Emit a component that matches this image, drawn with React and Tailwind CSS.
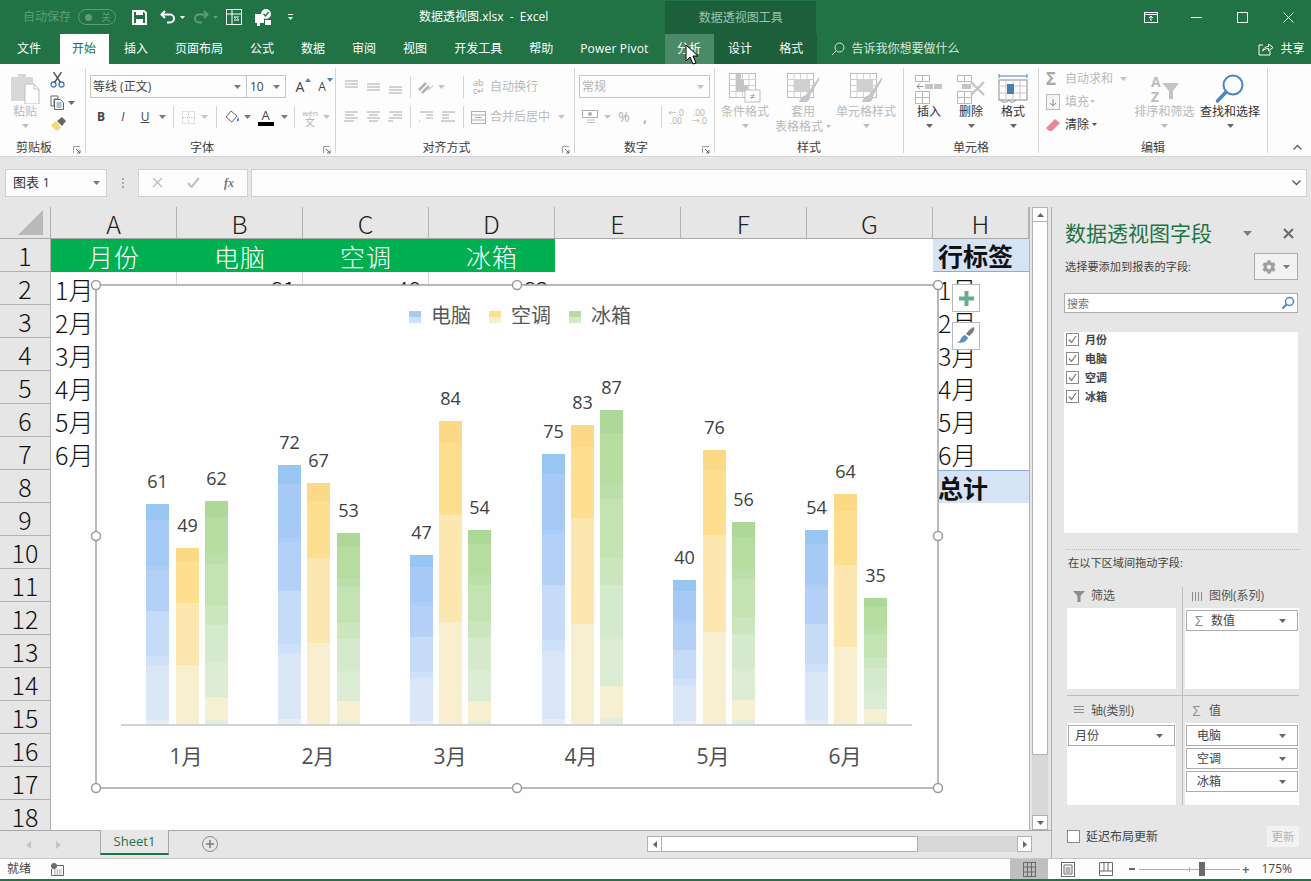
import React from 'react';
import { FaCog } from 'react-icons/fa';

const Caret = ({ c = '#7a7a7a', w = 7, h = 4 }) => (
  <svg width={w} height={h} viewBox="0 0 7 4" className="shrink-0"><polygon points="0,0 7,0 3.5,4" fill={c} /></svg>
);
const VSep = ({ h = 'h-[22px]' }) => <div className={`w-px bg-[#d4d4d4] ${h}`} />;
const Launcher = () => (
  <svg width="8" height="8" viewBox="0 0 8 8" className="absolute right-[4px] bottom-[-1px]"><path d="M0.5 7V.5H7" fill="none" stroke="#a0a0a0" /><path d="M3 3l4 4M7 4v3H4" fill="none" stroke="#6a6a6a" /></svg>
);
const Group = ({ w, label, launcher, children }) => (
  <div className={`relative flex flex-col h-[85px] border-r border-[#d4d4d4] shrink-0 ${w}`}>
    <div className="h-[71px] flex shrink-0">{children}</div>
    <div className={`h-[18px] shrink-0 flex items-center justify-center text-[12px] leading-none text-[#404040] ${launcher ? 'pr-[17px]' : ''}`}>{label}</div>
    {launcher && <Launcher />}
  </div>
);
const Big = ({ w, icon, lines, dim, caret = true }) => (
  <div className={`flex flex-col items-center shrink-0 ${w}`}>
    <div className="h-[36px] flex items-end justify-center">{icon}</div>
    {lines.map((l, i) => (
      <div key={i} className={`h-[15px] text-[12px] leading-[15px] whitespace-nowrap ${dim ? 'text-[#b9b9b9]' : 'text-[#333333]'}`}>{l}</div>
    ))}
    {caret && <div className="mt-[5px]"><Caret c={dim ? '#bdbdbd' : '#666666'} /></div>}
  </div>
);
const Slot = ({ w, children }) => <div className={`flex items-center justify-center shrink-0 h-full ${w}`}>{children}</div>;

const Lines = ({ ys, x1 = [1, 1, 1], x2 = [14, 14, 14], c = '#a8a8a8' }) => (
  <svg width="15" height="15" viewBox="0 0 15 15">
    {ys.map((y, i) => <line key={i} x1={x1[i]} x2={x2[i]} y1={y} y2={y} stroke={c} />)}
  </svg>
);

const CellStyleIcon = ({ kind }) => (
  <svg width="34" height="32" viewBox="0 0 34 32">
    <rect x="1.5" y="1.5" width="26" height="24" fill="#fff" stroke="#bdbdbd" />
    <path d="M1.5 7.5h26M1.5 13.5h26M1.5 19.5h26M8 1.5v24M14.5 1.5v24M21 1.5v24" stroke="#d0d0d0" fill="none" />
    {kind === 0 && <><rect x="8" y="7.5" width="8" height="6" fill="#c4c4c4" /><rect x="8" y="13.5" width="12" height="6" fill="#c4c4c4" /><rect x="8" y="1.5" width="5" height="6" fill="#c4c4c4" /><rect x="17" y="18" width="15" height="12" fill="#fff" stroke="#bdbdbd" /><text x="24.5" y="28" textAnchor="middle" fontSize="11" fill="#9a9a9a">≠</text></>}
    {kind > 0 && <rect x="8" y="7.5" width="16" height="12" fill="#d0d0d0" />}
    {kind > 0 && <path d="M33 5L20 23c-2 1-5 1-7 7h8c3-2 3-4 3-6L33 8z" fill="#c6c6c6" />}
  </svg>
);
const CellOp = ({ kind }) => (
  <svg width="30" height="30" viewBox="0 0 30 30">
    <path d="M1.5 1.5h14v6h-14zM8.5 1.5v6M1.5 17.5h14v12h-14zM1.5 23.5h14M8.5 17.5v12" fill="#fff" stroke="#b8b8b8" />
    {kind === 0 && <><path d="M3 12.5h6M3 12.5l3-3M3 12.5l3 3" stroke="#8a8a8a" fill="none" /><rect x="11" y="10" width="8" height="5" fill="#c6c6c6" /><rect x="20" y="10" width="8" height="5" fill="#c6c6c6" /></>}
    {kind === 1 && <><rect x="6" y="10" width="9" height="5" fill="#c6c6c6" /><path d="M15 8l13 13M28 8L15 21" stroke="#c4c4c4" strokeWidth="2.4" /></>}
  </svg>
);

const bars = [
  [[146, 504, 61], [176, 548, 49], [205, 501, 62]],
  [[278, 465, 72], [307, 483, 67], [337, 533, 53]],
  [[410, 555, 47], [439, 421, 84], [468, 530, 54]],
  [[542, 454, 75], [571, 425, 83], [600, 410, 87]],
  [[673, 580, 40], [703, 450, 76], [732, 522, 56]],
  [[805, 530, 54], [834, 494, 64], [864, 598, 35]],
];
const seg = [
  { f: [0, 0.073, 0.28, 0.3, 0.486, 0.69, 0.73, 0.98, 1], c: ['#97c6f3', '#a6c9f6', '#abcdf7', '#b4d0f7', '#c6dbf8', '#cfe0fa', '#dae5f6', '#e5edf8'] },
  { f: [0, 0.074, 0.31, 0.665, 1], c: ['#fcd987', '#fddf8f', '#fde7b0', '#f8efd0'] },
  { f: [0, 0.072, 0.233, 0.283, 0.47, 0.556, 0.722, 0.879, 0.982, 1], c: ['#aed897', '#b6dca0', '#bbdfa8', '#c4e3b3', '#cce6bf', '#d5e9cc', '#dcecd4', '#f7efd1', '#e3efdc'] },
];
const months = ['1月', '2月', '3月', '4月', '5月', '6月'];
const centers = [186, 318, 450, 581, 713, 845];
const BASE = 724;

const Chart = () => (
  <svg width="842" height="503" viewBox="96 285 842 503" className="overflow-visible block font-normal">
    <rect x="96" y="285" width="842" height="503" fill="#fefefe" stroke="#a3a3a3" strokeWidth="1.5" />
    {[['电脑', 409, '#a6c9f6', '#cfe0fa'], ['空调', 489, '#fddf8f', '#f8efd0'], ['冰箱', 569, '#b6dca0', '#d5e9cc']].map(([t, x, a, b]) => (
      <g key={t}>
        <rect x={x} y="311" width="12" height="6" fill={a} />
        <rect x={x} y="317" width="12" height="6" fill={b} />
        <text x={x + 22} y="323" fontSize="20" fill="#595959" fontFamily="'Noto Sans CJK SC',sans-serif">{t}</text>
      </g>
    ))}
    {bars.map((g, gi) => g.map(([x, top, v], si) => {
      const h = BASE - top;
      const s = seg[si];
      return (
        <g key={`${gi}-${si}`}>
          {s.c.map((c, i) => {
            const y0 = Math.round(top + h * s.f[i]);
            const y1 = Math.round(top + h * s.f[i + 1]);
            return <rect key={i} x={x} y={y0} width="23" height={y1 - y0} fill={c} shapeRendering="crispEdges" />;
          })}
          <text x={x + 11.5} y={top - 16} textAnchor="middle" fontSize="18" fill="#404040" fontFamily="'Open Sans',sans-serif">{v}</text>
        </g>
      );
    }))}
    <line x1="121" x2="912" y1="725" y2="725" stroke="#d2d2d2" strokeWidth="2" />
    {months.map((m, i) => (
      <text key={m} x={centers[i]} y="764" textAnchor="middle" fontSize="21" fill="#505050" fontFamily="'Open Sans','Noto Sans CJK SC',sans-serif">{m}</text>
    ))}
    {[[96, 285], [517, 285], [938, 285], [96, 536], [938, 536], [96, 788], [517, 788], [938, 788]].map(([x, y]) => (
      <circle key={`${x}-${y}`} cx={x} cy={y} r="4.5" fill="#fff" stroke="#9a9a9a" strokeWidth="1.5" />
    ))}
  </svg>
);

const cols = ['A', 'B', 'C', 'D', 'E', 'F', 'G', 'H'];
const tbl = [[61, 49, 62], [72, 67, 53], [47, 84, 54], [75, 83, 87], [40, 76, 56], [54, 64, 35]];

const Grid = () => {
  const rows = Array.from({ length: 18 }, (_, i) => i + 1);
  return (
    <div className="relative w-[1030px] h-[623px] overflow-hidden shrink-0 bg-[#fefefe] font-['Noto_Sans_CJK_SC',sans-serif] font-light">
      <div className="flex h-[32px] bg-[#e6e6e6] border-b border-[#a8a8a8]">
        <div className="w-[51px] shrink-0 border-r border-[#b0b0b0] flex items-end justify-end pr-[7px] pb-[3px]">
          <svg width="25" height="25" viewBox="0 0 25 25"><polygon points="25,0 25,25 0,25" fill="#b9b9b9" /></svg>
        </div>
        {cols.map((c) => (
          <div key={c} className={`shrink-0 flex items-center justify-center pt-[1px] text-[25px] leading-none text-[#222222] border-r border-[#b4b4b4] ${c === 'H' ? 'w-[96px]' : 'w-[126px]'}`}>{c}</div>
        ))}
      </div>
      {rows.map((r) => {
        const d = r >= 2 && r <= 7 ? tbl[r - 2] : null;
        return (
          <div key={r} className="flex h-[33px] text-[25px] leading-none text-[#111111]">
            <div className="w-[51px] shrink-0 bg-[#e6e6e6] border-r border-b border-[#b0b0b0] flex items-center justify-center pt-[1px]">{r}</div>
            {r === 1 ? (
              <>
                {['月份', '电脑', '空调', '冰箱'].map((t) => (
                  <div key={t} className="w-[126px] shrink-0 bg-[#00b050] text-white flex items-center justify-center pt-[1px] tracking-[1px]">{t}</div>
                ))}
                <div className="w-[378px] shrink-0" />
                <div className="w-[96px] shrink-0 bg-[#d6e3f5] border-b border-[#8eaadb] flex items-center pl-[5px] pt-[1px] font-bold">行标签</div>
              </>
            ) : (
              <>
                <div className={`w-[126px] shrink-0 flex items-center pl-[4px] pt-[1px] ${d ? 'border-r border-[#d6d6d6]' : ''}`}>{d ? months[r - 2] : ''}</div>
                {[0, 1, 2].map((k) => (
                  <div key={k} className={`w-[126px] shrink-0 flex items-center justify-end pr-[6px] pt-[1px] ${d && k < 2 ? 'border-r border-[#d6d6d6]' : ''}`}>{d ? d[k] : ''}</div>
                ))}
                <div className="w-[378px] shrink-0" />
                <div className={`w-[96px] shrink-0 flex items-center pl-[5px] ${r === 8 ? 'bg-[#d6e3f5] border-t border-[#8eaadb] font-bold' : 'pt-[1px]'}`}>{d ? months[r - 2] : r === 8 ? '总计' : ''}</div>
              </>
            )}
          </div>
        );
      })}
      <div className="absolute top-0 right-0 w-px h-full bg-[#b4b4b4]" />
      <div className="absolute left-[96px] top-[78px]"><Chart /></div>
      <div className="absolute left-[952px] top-[77px] w-[28px] h-[28px] bg-white border border-[#b8b8b8] flex items-center justify-center">
        <svg width="15" height="15" viewBox="0 0 15 15"><path d="M5.5 0h4v5.5H15v4H9.500V15h-4V9.500H0v-4h5.500z" fill="#68ab8d" /></svg>
      </div>
      <div className="absolute left-[952px] top-[115px] w-[28px] h-[28px] bg-white border border-[#b8b8b8] flex items-center justify-center">
        <svg width="20" height="20" viewBox="0 0 20 20"><path d="M18 1c1 3-1 6-5 9l-3-2c3-4 5-6 8-7z" fill="#7c7c7c" /><path d="M9 9l3 2.500c-1 4-5 6-11 5 3-1 3-2 4-4 .8-1.800 2.500-3 4-3.500z" fill="#5b8fc9" /></svg>
      </div>
    </div>
  );
};

const FieldDrop = ({ t, sigma }) => (
  <div className="h-[21px] w-[112px] border border-[#acacac] bg-[#fefefe] flex items-center pr-[11px] text-[12px] leading-none text-[#444444] shrink-0">
    {sigma && <span className="ml-[8px] w-[10px] text-[#8a8a8a] text-[14px]">Σ</span>}
    <span className={sigma ? 'ml-[6px]' : 'ml-[10px]'}>{t}</span>
    <span className="ml-auto"><Caret c="#666666" /></span>
  </div>
);
const AreaHead = ({ icon, t }) => (
  <div className="flex items-center text-[12px] leading-none text-[#555555]">
    <span className="w-[23px] flex justify-center shrink-0">{icon}</span>
    <span className="ml-[1px]">{t}</span>
  </div>
);

const Panel = () => (
  <div className="w-[260px] shrink-0 h-[651px] bg-[#e6e6e6] border-l border-[#aeaeae] pl-[13px] flex flex-col text-[#444444]">
    <div className="h-[24px] mt-[14px] flex items-center pr-[17px]">
      <span className="text-[21px] leading-none text-[#217346] whitespace-nowrap">数据透视图字段</span>
      <span className="ml-auto"><Caret c="#7a7a7a" w={9} h={5} /></span>
      <svg width="11" height="11" viewBox="0 0 11 11" className="ml-[31px]"><path d="M1 1l9 9M10 1l-9 9" stroke="#6a6a6a" strokeWidth="2" /></svg>
    </div>
    <div className="h-[27px] mt-[8px] flex items-center pr-[13px]">
      <span className="text-[11.200px] leading-none whitespace-nowrap">选择要添加到报表的字段:</span>
      <div className="ml-auto w-[44px] h-[27px] border border-[#acacac] bg-[#f2f2f2] flex items-center justify-center gap-[7px]">
        <FaCog size={14} color="#a0a0a0" />
        <Caret c="#7a7a7a" />
      </div>
    </div>
    <div className="h-[20px] w-[234px] mt-[13px] -ml-px border border-[#acacac] bg-[#fefefe] flex items-center pl-[2px] pr-[2px] text-[11px] leading-none text-[#777777]">
      <span>搜索</span>
      <svg width="14" height="14" viewBox="0 0 14 14" className="ml-auto"><circle cx="8.500" cy="5.500" r="4" fill="none" stroke="#4a86c0" strokeWidth="1.500" /><path d="M5.500 8.500L1.500 12.500" stroke="#4a86c0" strokeWidth="2" /></svg>
    </div>
    <div className="h-[201px] w-[234px] mt-[19px] -ml-px bg-[#fefefe] flex flex-col">
      {['月份', '电脑', '空调', '冰箱'].map((t) => (
        <div key={t} className="h-[19px] first:mt-[-2px] flex items-center pl-[2px] text-[11px] leading-none font-bold text-[#444444]">
          <span className="w-[13px] h-[13px] border border-[#8a8a8a] bg-white flex items-center justify-center shrink-0">
            <svg width="9" height="9" viewBox="0 0 9 9"><path d="M1 4.500l2.500 3L8 1" fill="none" stroke="#7a7a7a" strokeWidth="1.300" /></svg>
          </span>
          <span className="ml-[6px]">{t}</span>
        </div>
      ))}
    </div>
    <div className="mt-[16px] ml-[1px] w-[235px] border-t border-dotted border-[#bcbcbc]" />
    <div className="mt-[6px] ml-[3px] h-[14px] text-[11.200px] leading-[14px] whitespace-nowrap">在以下区域间拖动字段:</div>
    <div className="mt-[17px] ml-[2px] w-[232px] flex flex-col">
      <div className="flex h-[109px] border-b border-[#bdbdbd]">
        <div className="w-[116px] border-r border-[#bdbdbd] flex flex-col">
          <div className="h-[21px] pt-[3px]"><AreaHead t="筛选" icon={<svg width="12" height="11" viewBox="0 0 12 11"><polygon points="0,0 12,0 7.500,5 7.500,11 4.500,11 4.500,5" fill="#8c8c8c" /></svg>} /></div>
          <div className="w-[109px] h-[81px] bg-[#fefefe]" />
        </div>
        <div className="pl-[2px] flex flex-col">
          <div className="h-[21px] pt-[3px]"><AreaHead t="图例(系列)" icon={<svg width="10" height="9" viewBox="0 0 10 9"><path d="M.500 0v9M3.500 0v9M6.500 0v9M9.500 0v9" stroke="#8c8c8c" /></svg>} /></div>
          <div className="w-[114px] h-[81px] bg-[#fefefe] pt-[2px] pl-px"><FieldDrop t="数值" sigma /></div>
        </div>
      </div>
      <div className="flex h-[109px]">
        <div className="w-[116px] border-r border-[#bdbdbd] flex flex-col">
          <div className="h-[27px] flex items-center pt-[2px]"><AreaHead t="轴(类别)" icon={<svg width="10" height="9" viewBox="0 0 10 9"><path d="M0 .500h10M0 3.500h10M0 6.500h10" stroke="#8c8c8c" /></svg>} /></div>
          <div className="w-[109px] h-[82px] bg-[#fefefe] pt-[2px] pl-px"><div className="w-[107px]"><div className="h-[21px] border border-[#acacac] flex items-center pl-[6px] pr-[11px] text-[12px] leading-none text-[#444444]"><span>月份</span><span className="ml-auto"><Caret c="#666666" /></span></div></div></div>
        </div>
        <div className="pl-[2px] flex flex-col">
          <div className="h-[27px] flex items-center pt-[2px]"><AreaHead t="值" icon={<span className="text-[#8c8c8c] text-[14px]">Σ</span>} /></div>
          <div className="w-[114px] h-[82px] bg-[#fefefe] pt-[2px] pl-px flex flex-col gap-[2px]">
            {['电脑', '空调', '冰箱'].map((t) => <FieldDrop key={t} t={t} />)}
          </div>
        </div>
      </div>
    </div>
    <div className="mt-[21px] ml-[2px] w-[232px] h-[21px] flex items-center">
      <span className="w-[13px] h-[13px] border border-[#8a8a8a] bg-white shrink-0" />
      <span className="ml-[6px] text-[12px] leading-none text-[#444444]">延迟布局更新</span>
      <span className="ml-auto w-[32px] h-[21px] bg-[#f2f2f2] flex items-center justify-center text-[11.500px] leading-none text-[#b5b5b5]">更新</span>
    </div>
  </div>
);

const Tab = ({ t, cls = 'mx-px', active, hover }) => (
  <div className={`h-[30px] px-[12.500px] flex items-center justify-center whitespace-nowrap shrink-0 text-[12px] leading-none ${cls} ${active ? 'bg-[#fefefe] text-[#217346]' : 'text-white'} ${hover ? 'bg-[#4a8a68]' : ''}`}>{t}</div>
);

export default function App() {
  return (
    <div className="relative w-[1311px] h-[881px] overflow-hidden flex flex-col bg-[#e6e6e6] font-['Open_Sans','Noto_Sans_CJK_SC',sans-serif]">
      {/* title bar */}
      <div className="h-[34px] bg-[#217346] flex items-center shrink-0 relative">
        <span className="ml-[23px] text-[12px] leading-none text-[#5c9c7a] whitespace-nowrap">自动保存</span>
        <div className="ml-[7px] w-[38px] h-[16px] rounded-full border border-[#5c9c7a] flex items-center pl-[6px] text-[10px] leading-none text-[#5c9c7a]">
          <span className="w-[7px] h-[7px] rounded-full bg-[#5c9c7a]" /><span className="ml-[9px]">关</span>
        </div>
        <svg width="15" height="15" viewBox="0 0 15 15" className="ml-[16px]"><path d="M1 1h11l2 2v11H1z" fill="none" stroke="#fff" strokeWidth="2" /><rect x="4" y="1" width="7" height="4" fill="#fff" /><rect x="4" y="9" width="7" height="5" fill="#fff" /></svg>
        <svg width="16" height="14" viewBox="0 0 16 14" className="ml-[13px]"><path d="M5 1L1.500 4.500 5 8M2 4.500h8a4 4 0 0 1 0 8H7" fill="none" stroke="#fff" strokeWidth="2" /></svg>
        <span className="ml-[4px]"><Caret c="#ffffff" w={5} h={3} /></span>
        <svg width="16" height="14" viewBox="0 0 16 14" className="ml-[8px]"><path d="M11 1l3.500 3.500L11 8M14 4.500H6a4 4 0 0 0 0 8h3" fill="none" stroke="#5c9c7a" strokeWidth="2" /></svg>
        <span className="ml-[4px]"><Caret c="#5c9c7a" w={5} h={3} /></span>
        <svg width="16" height="16" viewBox="0 0 16 16" className="ml-[8px]"><rect x=".5" y=".5" width="15" height="15" fill="none" stroke="#fff" /><path d="M1 5h14M6 1v14" stroke="#fff" strokeWidth="1" /><path d="M8 11h5l-1.500-1.500M13 8H8l1.500 1.500" stroke="#fff" fill="none" /></svg>
        <svg width="18" height="17" viewBox="0 0 18 17" className="ml-[12px]"><path d="M1 5h9v9H6v3H3v-3H1z" fill="#fff" /><circle cx="12" cy="5" r="5" fill="#fff" /><path d="M9.500 5l2 2 3-4" stroke="#217346" strokeWidth="1.300" fill="none" /><rect x="11" y="11" width="6" height="5" fill="#fff" /></svg>
        <span className="ml-[16px] flex flex-col items-center gap-[2px]"><span className="w-[5px] h-px bg-white" /><Caret c="#ffffff" w={5} h={3} /></span>
        <span className="ml-[126px] text-[12px] leading-none text-white whitespace-nowrap">数据透视图.xlsx&nbsp;&nbsp;-&nbsp;&nbsp;Excel</span>
        <div className="ml-[117px] w-[151px] h-[33px] mt-[1px] self-end bg-[#1c5f3a] flex items-center justify-center text-[12px] leading-none text-[#9cc4ae]">数据透视图工具</div>
        <div className="ml-[328px] flex items-center">
          <svg width="14" height="11" viewBox="0 0 14 11"><rect x=".5" y=".5" width="13" height="10" fill="none" stroke="#fff" /><path d="M1 2.500h12M7 9V4.500M5 6l2-2 2 2" stroke="#fff" fill="none" /></svg>
          <span className="ml-[33px] w-[11px] h-px bg-white" />
          <span className="ml-[35px] w-[11px] h-[11px] border border-white" />
          <svg width="11" height="11" viewBox="0 0 11 11" className="ml-[35px]"><path d="M.500.500l10 10M10.500.500l-10 10" stroke="#fff" /></svg>
        </div>
      </div>
      {/* tabs */}
      <div className="h-[30px] bg-[#217346] flex items-center pl-[3.500px] shrink-0">
        <Tab t="文件" />
        <Tab t="开始" active cls="ml-[5px] mr-[2px]" />
        {['插入', '页面布局', '公式', '数据', '审阅', '视图', '开发工具', '帮助'].map((t) => <Tab key={t} t={t} />)}
        <Tab t={<span className="tracking-[0.200px]">Power Pivot</span>} />
        <div className="ml-[2.500px] flex w-[152px] bg-[#1c5f3a] shrink-0">
          <Tab t="分析" cls="mx-0" hover />
          <Tab t="设计" cls="ml-[2px] mr-px" />
          <Tab t="格式" />
        </div>
        <svg width="14" height="14" viewBox="0 0 14 14" className="ml-[14px]"><circle cx="8.500" cy="5.500" r="4.500" fill="none" stroke="#d8e8df" /><path d="M5.300 8.700L1 13" stroke="#d8e8df" /></svg>
        <span className="ml-[7px] text-[12px] leading-none text-[#d8e8df] whitespace-nowrap">告诉我你想要做什么</span>
        <svg width="16" height="14" viewBox="0 0 16 14" className="ml-[298px]"><path d="M5 3H1v10h11V9" fill="none" stroke="#fff" /><path d="M4.500 9c1-3 3-4.500 6-4.500V2L15 5.500 10.500 9V6.500c-2.500 0-4.500 1-6 2.500z" fill="none" stroke="#fff" /></svg>
        <span className="ml-[7px] text-[12px] leading-none text-white whitespace-nowrap">共享</span>
      </div>
      {/* ribbon */}
      <div className="h-[93px] shrink-0 bg-[#fdfdfd] border-b border-[#d4d4d4] pt-[4px] flex relative">
        <Group w="w-[86px]" label="剪贴板" launcher>
          <Big w="w-[50px]" dim lines={['粘贴']} icon={
            <svg width="30" height="32" viewBox="0 0 30 32"><path d="M1 5h7V2h8v3h7v24H1z" fill="#d8d8d8" /><path d="M15 12h9l5 5v15H15z" fill="#fff" stroke="#c0c0c0" /><path d="M24 12v5h5" fill="none" stroke="#c0c0c0" /></svg>
          } />
          <div className="flex flex-col items-start pt-[4px] gap-[7px]">
            <svg width="15" height="16" viewBox="0 0 15 16"><circle cx="3.500" cy="12.500" r="2.500" fill="none" stroke="#3f7fbf" strokeWidth="1.300" /><circle cx="11.500" cy="12.500" r="2.500" fill="none" stroke="#3f7fbf" strokeWidth="1.300" /><path d="M4.500 10.500L11.500 0M10.500 10.500L3.500 0" stroke="#555555" strokeWidth="1.400" /></svg>
            <div className="flex items-center gap-[3px]">
              <svg width="15" height="15" viewBox="0 0 15 15"><path d="M1 1h7v3H4v7H1z" fill="#fff" stroke="#666666" /><path d="M4.500 4.500h6l3 3v7h-9z" fill="#fff" stroke="#666666" /><path d="M6.500 8h5M6.500 10h5M6.500 12h5" stroke="#4a86c0" /></svg>
              <Caret c="#666666" />
            </div>
            <svg width="16" height="14" viewBox="0 0 16 14"><path d="M1 8l5-4 5 6-3 4c-3-1-5-3-7-6z" fill="#f5d67a" /><path d="M7 4l5-4 4 4-4 5z" fill="#666666" /></svg>
          </div>
        </Group>
        <Group w="w-[250px]" label="字体" launcher>
          <div className="flex flex-col pl-[4px]">
            <div className="mt-[7px] h-[23px] flex items-center">
              <div className="w-[157px] h-[23px] border border-[#c4c4c4] flex items-center px-[2px] pr-[5px] text-[12px] leading-none text-[#444444]"><span>等线 (正文)</span><span className="ml-auto"><Caret c="#7a7a7a" /></span></div>
              <div className="w-[40px] h-[23px] -ml-px border border-[#c4c4c4] flex items-center pl-[3px] pr-[5px] text-[12px] leading-none text-[#444444]"><span>10</span><span className="ml-auto"><Caret c="#7a7a7a" /></span></div>
              <div className="ml-[6px] relative w-[16px] h-[20px] flex items-center justify-center text-[14px] leading-none text-[#444444]">A<svg width="6" height="4" viewBox="0 0 6 4" className="absolute right-[-3px] top-[1px]"><polygon points="3,0 6,4 0,4" fill="#4a86c0" /></svg></div>
              <div className="ml-[6px] relative w-[16px] h-[20px] flex items-center justify-center text-[12px] leading-none text-[#444444]">A<svg width="6" height="4" viewBox="0 0 6 4" className="absolute right-[-3px] top-[1px]"><polygon points="0,0 6,0 3,4" fill="#4a86c0" /></svg></div>
            </div>
            <div className="mt-[9px] h-[20px] flex items-center text-[#444444]">
              <Slot w="w-[22px]"><span className="text-[12px] leading-none font-bold">B</span></Slot>
              <Slot w="w-[22px]"><span className="text-[12px] leading-none italic">I</span></Slot>
              <Slot w="w-[22px]"><span className="text-[12px] leading-none underline">U</span></Slot>
              <Slot w="w-[12px]"><Caret /></Slot>
              <Slot w="w-[10px]"><VSep /></Slot>
              <Slot w="w-[20px]"><svg width="13" height="13" viewBox="0 0 13 13"><rect x=".5" y=".5" width="12" height="12" fill="none" stroke="#c4c4c4" strokeDasharray="1 1" /><path d="M6.500 1v11M1 6.500h11" stroke="#c4c4c4" strokeDasharray="1 1" /></svg></Slot>
              <Slot w="w-[13px]"><Caret c="#c4c4c4" /></Slot>
              <Slot w="w-[10px]"><VSep /></Slot>
              <Slot w="w-[22px]"><svg width="15" height="14" viewBox="0 0 15 14"><path d="M6 1l6 5-5 6-6-5z" fill="#fff" stroke="#666666" /><path d="M13 7c1 2 1.500 3 .5 4s-2 0-1.500-1z" fill="#4a86c0" /></svg></Slot>
              <Slot w="w-[9px]"><Caret /></Slot>
              <Slot w="w-[27px]"><span className="flex flex-col items-center"><span className="text-[13px] leading-[13px]">A</span><span className="w-[16px] h-[4px] bg-black" /></span></Slot>
              <Slot w="w-[10px]"><Caret /></Slot>
              <Slot w="w-[11px]"><VSep /></Slot>
              <Slot w="w-[20px]"><span className="flex flex-col items-center text-[#b0b0b0] leading-none"><span className="text-[8px] leading-[9px]">wén</span><span className="text-[10px] leading-[10px]">文</span></span></Slot>
              <Slot w="w-[12px]"><Caret c="#c4c4c4" /></Slot>
            </div>
          </div>
        </Group>
        <Group w="w-[239px]" label="对齐方式" launcher>
          <div className="flex flex-col pl-[4px]">
            <div className="mt-[7px] h-[23px] flex items-center">
              <Slot w="w-[22px]"><Lines ys={[2, 5, 8]} /></Slot>
              <Slot w="w-[22px]"><Lines ys={[5, 8, 11]} /></Slot>
              <Slot w="w-[22px]"><Lines ys={[8, 11, 14]} /></Slot>
              <Slot w="w-[9px]"><VSep /></Slot>
              <Slot w="w-[22px]"><svg width="18" height="14" viewBox="0 0 18 14"><path d="M2 10l7-7M5 13l7-7" stroke="#b0b0b0" strokeWidth="2.500" /><path d="M11 10l5-4" stroke="#9cb6d4" /></svg></Slot>
              <Slot w="w-[8px]"><Caret c="#c4c4c4" /></Slot>
              <span className="ml-[18px]"><VSep /></span>
              <span className="ml-[9px] text-[#a8a8a8] text-[9px] leading-[8px] w-[12px]">ab<br />c↵</span>
              <span className="ml-[5px] text-[12px] leading-none text-[#b9b9b9] whitespace-nowrap">自动换行</span>
            </div>
            <div className="mt-[9px] h-[20px] flex items-center">
              <Slot w="w-[22px]"><Lines ys={[2, 5, 8, 11]} x2={[14, 10, 14, 10]} /></Slot>
              <Slot w="w-[22px]"><Lines ys={[2, 5, 8, 11]} x1={[1, 3, 1, 3]} x2={[14, 12, 14, 12]} /></Slot>
              <Slot w="w-[22px]"><Lines ys={[2, 5, 8, 11]} x1={[1, 5, 1, 5]} /></Slot>
              <Slot w="w-[9px]"><VSep /></Slot>
              <Slot w="w-[22px]"><Lines ys={[2, 5, 8, 11]} x1={[1, 7, 7, 1]} /></Slot>
              <Slot w="w-[22px]"><Lines ys={[2, 5, 8, 11]} x2={[14, 8, 8, 14]} /></Slot>
              <span className="ml-[4px]"><VSep /></span>
              <svg width="15" height="15" viewBox="0 0 15 15" className="ml-[7px]"><rect x=".5" y="1.500" width="14" height="12" fill="none" stroke="#b0b0b0" /><path d="M1 5h13M1 10h13M4 7.500h7" stroke="#b0b0b0" /></svg>
              <span className="ml-[4px] text-[12px] leading-none text-[#b9b9b9] whitespace-nowrap">合并后居中</span>
              <span className="ml-[8px]"><Caret c="#c4c4c4" /></span>
            </div>
          </div>
        </Group>
        <Group w="w-[140px]" label="数字" launcher>
          <div className="flex flex-col pl-[4px]">
            <div className="mt-[7px] h-[23px] w-[131px] border border-[#c4c4c4] flex items-center pl-[2px] pr-[5px] text-[12px] leading-none text-[#b4b4b4]"><span>常规</span><span className="ml-auto"><Caret c="#c4c4c4" /></span></div>
            <div className="mt-[9px] h-[20px] flex items-center text-[#b0b0b0]">
              <Slot w="w-[22px]"><svg width="16" height="14" viewBox="0 0 16 14"><rect x=".5" y=".5" width="15" height="7" fill="#fff" stroke="#b0b0b0" /><circle cx="8" cy="4" r="2" fill="#b0b0b0" /><path d="M5 10h8M5 12.500h8" stroke="#c0c0c0" /></svg></Slot>
              <Slot w="w-[12px]"><Caret c="#c4c4c4" /></Slot>
              <Slot w="w-[22px]"><span className="text-[14px] leading-none">%</span></Slot>
              <Slot w="w-[20px]"><span className="text-[14px] leading-none font-bold">,</span></Slot>
              <Slot w="w-[12px]"><VSep /></Slot>
              <Slot w="w-[18px]"><span className="text-[8.500px] leading-[8px] text-center whitespace-nowrap">←.0<br />.00</span></Slot>
              <Slot w="w-[28px]"><span className="text-[8.500px] leading-[8px] text-center whitespace-nowrap">.00<br />→.0</span></Slot>
            </div>
          </div>
        </Group>
        <Group w="w-[189px]" label="样式">
          <Big w="w-[60px]" dim lines={['条件格式']} icon={<CellStyleIcon kind={0} />} />
          <Big w="w-[56px]" dim lines={['套用', <span className="flex items-center gap-[3px]">表格格式<Caret c="#bdbdbd" w={5} h={3} /></span>]} caret={false} icon={<CellStyleIcon kind={1} />} />
          <Big w="w-[70px]" dim lines={['单元格样式']} icon={<CellStyleIcon kind={2} />} />
        </Group>
        <Group w="w-[135px]" label="单元格">
          <div className="w-[4px]" />
          <Big w="w-[42px]" lines={['插入']} icon={<CellOp kind={0} />} />
          <Big w="w-[42px]" lines={['删除']} icon={<CellOp kind={1} />} />
          <Big w="w-[42px]" lines={['格式']} icon={
            <svg width="30" height="32" viewBox="0 0 30 32"><path d="M1 4h28M1 2v4M29 2v4" stroke="#4a86c0" fill="none" /><rect x="1" y="8" width="28" height="20" fill="#fff" stroke="#8a8a8a" /><path d="M1 14h28M1 21h28M8 8v20M15 8v20M22 8v20" stroke="#c8c8c8" /><rect x="9" y="12" width="7" height="10" fill="#4a7fb5" /><path d="M3 28c0 3 6 3 8 0 1 3 5 3 7 0" fill="none" stroke="#8a8a8a" /></svg>
          } />
        </Group>
        <Group w="w-[229px]" label="编辑">
          <div className="w-[92px] flex flex-col pl-[7px] -mt-[1px]">
            <div className="h-[23px] flex items-center"><span className="text-[17px] leading-none text-[#a8a8a8] w-[19px] font-bold">Σ</span><span className="text-[12px] leading-none text-[#b9b9b9] whitespace-nowrap">自动求和</span><span className="ml-[7px]"><Caret c="#c4c4c4" /></span></div>
            <div className="h-[23px] flex items-center"><svg width="14" height="16" viewBox="0 0 14 16" className="mr-[5px]"><rect x=".5" y=".5" width="13" height="15" fill="#f5f5f5" stroke="#b8b8b8" /><path d="M7 5v7M4 9l3 3 3-3" fill="none" stroke="#8a8a8a" /></svg><span className="text-[12px] leading-none text-[#b9b9b9] whitespace-nowrap">填充</span><span className="ml-[1px]"><Caret c="#c4c4c4" w={5} h={3} /></span></div>
            <div className="h-[23px] flex items-center"><svg width="14" height="14" viewBox="0 0 14 14" className="mr-[5px]"><path d="M9 1l5 4-8 8H3L0 10z" fill="#e8889a" /></svg><span className="text-[12px] leading-none text-[#333333] whitespace-nowrap">清除</span><span className="ml-[3px]"><Caret c="#555555" w={5} h={3} /></span></div>
          </div>
          <Big w="w-[67px]" dim lines={['排序和筛选']} icon={
            <svg width="30" height="30" viewBox="0 0 30 30"><text x="1" y="13" fontSize="14" fontWeight="700" fill="#bcbcbc">A</text><text x="1" y="28" fontSize="14" fontWeight="700" fill="#bcbcbc">Z</text><polygon points="12,9 29,9 23,17 23,25 19,25 19,17" fill="#c4c4c4" /></svg>
          } />
          <Big w="w-[64px]" lines={['查找和选择']} icon={
            <svg width="30" height="30" viewBox="0 0 30 30"><circle cx="18" cy="11" r="9.500" fill="none" stroke="#4a86c0" strokeWidth="2" /><path d="M11 18L2.500 27" stroke="#4a86c0" strokeWidth="3.500" strokeLinecap="round" /></svg>
          } />
        </Group>
        <svg width="9" height="6" viewBox="0 0 9 6" className="absolute right-[9px] bottom-[6px]"><path d="M.500 5.500l4-4 4 4" fill="none" stroke="#666666" strokeWidth="1.500" /></svg>
      </div>
      {/* formula bar */}
      <div className="h-[50px] shrink-0 flex items-center pl-[5px] pb-[2px] pt-[3px]">
        <div className="w-[102px] h-[28px] border border-[#d0d0d0] bg-[#fdfdfd] flex items-center pl-[7px] pr-[6px] text-[13px] leading-none text-[#333333]"><span>图表 1</span><span className="ml-auto"><Caret c="#7a7a7a" /></span></div>
        <div className="ml-[15px] flex flex-col gap-[2px]">
          <span className="w-[2px] h-[2px] bg-[#a8a8a8]" /><span className="w-[2px] h-[2px] bg-[#a8a8a8]" /><span className="w-[2px] h-[2px] bg-[#a8a8a8]" />
        </div>
        <div className="ml-[14px] w-[110px] h-[28px] border border-[#d0d0d0] bg-[#fdfdfd] flex items-center text-[#b8b8b8]">
          <div className="w-[36px] flex justify-center"><svg width="11" height="11" viewBox="0 0 11 11"><path d="M1 1l9 9M10 1l-9 9" stroke="#c0c0c0" strokeWidth="1.500" /></svg></div>
          <div className="w-[36px] flex justify-center"><svg width="13" height="11" viewBox="0 0 13 11"><path d="M1 6l3.500 4L12 1" fill="none" stroke="#c0c0c0" strokeWidth="2" /></svg></div>
          <div className="w-[36px] flex justify-center text-[12px] leading-none italic font-bold text-[#777777] font-['Liberation_Serif',serif]">fx</div>
        </div>
        <div className="ml-[3px] w-[1056px] h-[28px] border border-[#d0d0d0] bg-[#fdfdfd] flex items-center justify-end pr-[5px]">
          <svg width="9" height="6" viewBox="0 0 9 6"><path d="M.500.500l4 4 4-4" fill="none" stroke="#555555" strokeWidth="1.300" /></svg>
        </div>
      </div>
      {/* body */}
      <div className="flex h-[651px] shrink-0">
        <div className="w-[1051px] shrink-0 flex flex-col">
          <div className="flex h-[623px]">
            <Grid />
            <div className="ml-[2px] w-[16px] h-[623px] flex flex-col bg-[#d8d8d8]">
              <div className="h-[15px] bg-[#fefefe] border border-[#b0b0b0] flex items-center justify-center"><svg width="7" height="4" viewBox="0 0 7 4"><polygon points="3.500,0 7,4 0,4" fill="#666666" /></svg></div>
              <div className="h-[533px] bg-[#fefefe] border border-t-0 border-[#b0b0b0]" />
              <div className="mt-auto h-[15px] bg-[#fefefe] border border-[#b0b0b0] flex items-center justify-center"><Caret c="#666666" /></div>
            </div>
          </div>
          <div className="h-[28px] border-t border-[#a8a8a8] flex items-start relative">
            <div className="w-[100px] h-[27px] flex items-center pl-[26px] gap-[25px] shrink-0">
              <svg width="5" height="8" viewBox="0 0 5 8"><polygon points="5,0 5,8 0,4" fill="#c4c4c4" /></svg>
              <svg width="5" height="8" viewBox="0 0 5 8"><polygon points="0,0 0,8 5,4" fill="#c4c4c4" /></svg>
            </div>
            <div className="-mt-px w-[69px] h-[25px] bg-[#e8e8e8] border-x border-b-2 border-x-[#a8a8a8] border-b-[#217346] flex items-center justify-center text-[13px] leading-none text-[#217346] shrink-0">Sheet1</div>
            <div className="ml-[33px] mt-[5px] w-[16px] h-[16px] rounded-full border border-[#8a8a8a] flex items-center justify-center shrink-0">
              <svg width="8" height="8" viewBox="0 0 8 8"><path d="M4 0v8M0 4h8" stroke="#7a7a7a" strokeWidth="1.500" /></svg>
            </div>
            <div className="ml-[429px] mt-[5px] h-[16px] w-[385px] flex bg-[#d8d8d8] shrink-0">
              <div className="w-[15px] bg-[#fefefe] border border-[#b0b0b0] flex items-center justify-center"><svg width="4" height="7" viewBox="0 0 4 7"><polygon points="4,0 4,7 0,3.500" fill="#666666" /></svg></div>
              <div className="w-[256px] bg-[#fefefe] border border-l-0 border-[#b0b0b0]" />
              <div className="ml-auto w-[15px] bg-[#fefefe] border border-[#b0b0b0] flex items-center justify-center"><svg width="4" height="7" viewBox="0 0 4 7"><polygon points="0,0 0,7 4,3.500" fill="#666666" /></svg></div>
            </div>
          </div>
        </div>
        <Panel />
      </div>
      {/* status */}
      <div className="h-[21px] shrink-0 bg-[#fdfdfd] border-t border-[#c6c6c6] flex items-center text-[12px] leading-none text-[#444444]">
        <span className="ml-[7px]">就绪</span>
        <svg width="13" height="13" viewBox="0 0 13 13" className="ml-[20px]"><circle cx="3" cy="3" r="3" fill="#6a6a6a" /><path d="M5 2.500h7.500V12.500H.5V6" fill="none" stroke="#6a6a6a" /><path d="M3 7h8M3 9h8M3 11h8" stroke="#8a8a8a" strokeDasharray="1.500 1" /></svg>
        <div className="ml-[946px] flex items-center h-full">
          <div className="w-[38px] h-full bg-[#bfbfbf] flex items-center justify-center"><svg width="13" height="15" viewBox="0 0 13 15"><rect x=".5" y=".5" width="12" height="14" fill="none" stroke="#6a6a6a" /><path d="M4.500 1v13M8.500 1v13M1 5h11M1 10h11" stroke="#6a6a6a" /></svg></div>
          <div className="ml-[11px] w-[17px] flex justify-center"><svg width="14" height="15" viewBox="0 0 14 15"><rect x=".5" y=".5" width="13" height="14" fill="none" stroke="#6a6a6a" /><path d="M3 3h8v9H3zM4.500 6h5M4.500 8h5M4.500 10h5" fill="none" stroke="#6a6a6a" /></svg></div>
          <div className="ml-[21px] w-[17px] flex justify-center"><svg width="14" height="14" viewBox="0 0 14 14"><path d="M.5.500h13v13H.5zM.5 9h13M5 .500V9M9 .500V9" fill="none" stroke="#6a6a6a" /></svg></div>
          <span className="ml-[15px] w-[6px] h-[2px] bg-[#6a6a6a]" />
          <div className="ml-[4px] w-[101px] h-[14px] flex items-center relative">
            <div className="w-full h-px bg-[#b0b0b0]" />
            <div className="absolute left-[50px] w-px h-[5px] bg-[#b0b0b0]" />
            <div className="absolute left-[60px] w-[6px] h-[14px] bg-[#6a6a6a]" />
          </div>
          <span className="ml-[2px] text-[13px] leading-none font-bold text-[#6a6a6a]">+</span>
          <span className="ml-[12px] text-[12px] leading-none text-[#444444]">175%</span>
        </div>
      </div>
      <div className="h-[2px] shrink-0 bg-[#217346]" />
      {/* cursor */}
      <svg width="13" height="21" viewBox="0 0 13 21" className="absolute left-[685px] top-[44px]"><path d="M1 1v16l4-4 3 7 3-1-3-7h5z" fill="#fff" stroke="#000" strokeWidth="1" /></svg>
    </div>
  );
}
